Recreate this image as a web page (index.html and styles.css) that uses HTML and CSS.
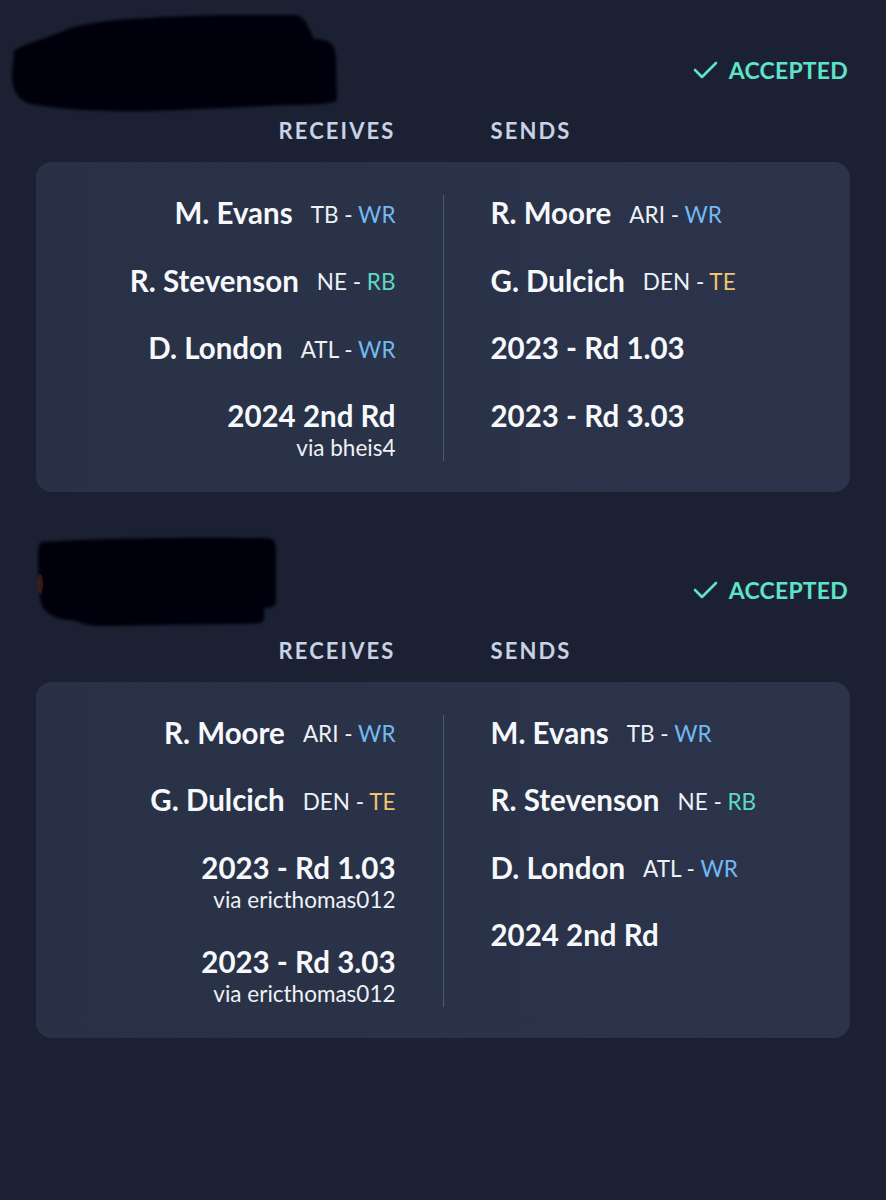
FILE: index.html
```html
<!DOCTYPE html>
<html lang="en">
<head>
  <meta charset="UTF-8">
  <title>Trades</title>
  <link rel="stylesheet" href="styles.css">
</head>
<body>

  <div class="page">

    <!-- trade one -->
    <section class="trade">
      <div class="trade-head">
        <svg class="redact redact-one" width="340" height="110" viewBox="0 0 340 110">
          <defs><filter id="soft1"><feGaussianBlur stdDeviation="1.6"/></filter></defs>
          <path filter="url(#soft1)" fill="#030308" d="M8 42 C18 34 40 30 62 20 C90 10 150 8 210 6 L290 6 C300 8 304 22 308 30 C322 30 330 34 330 50 L331 92 C320 96 300 96 280 96 L150 102 C100 103 60 101 30 96 C14 94 6 84 6 66 Z"/>
        </svg>
        <div class="status">
          <svg class="check" width="26" height="20" viewBox="0 0 26 20"><polyline points="2,10 9,17 23,3" fill="none" stroke="#5ee3cb" stroke-width="2.6" stroke-linecap="round" stroke-linejoin="round"/></svg>
          ACCEPTED
        </div>
      </div>

      <div class="sides">
        <div class="side-label receives">RECEIVES</div>
        <div></div>
        <div class="side-label">SENDS</div>
      </div>

      <div class="card">
        <div class="col col-left">
          <div class="asset"><span class="name">M. Evans</span><span class="team">TB - <span class="wr">WR</span></span></div>
          <div class="asset"><span class="name">R. Stevenson</span><span class="team">NE - <span class="rb">RB</span></span></div>
          <div class="asset"><span class="name">D. London</span><span class="team">ATL - <span class="wr">WR</span></span></div>
          <div class="pick"><span class="name">2024 2nd Rd</span><span class="via">via bheis4</span></div>
        </div>
        <div class="divider"></div>
        <div class="col col-right">
          <div class="asset"><span class="name">R. Moore</span><span class="team">ARI - <span class="wr">WR</span></span></div>
          <div class="asset"><span class="name">G. Dulcich</span><span class="team">DEN - <span class="te">TE</span></span></div>
          <div class="pick"><span class="name">2023 - Rd 1.03</span></div>
          <div class="pick"><span class="name">2023 - Rd 3.03</span></div>
        </div>
      </div>
    </section>

    <!-- trade two -->
    <section class="trade">
      <div class="trade-head">
        <svg class="redact redact-two" width="250" height="100" viewBox="0 0 250 100">
          <defs><filter id="soft2"><feGaussianBlur stdDeviation="1.4"/></filter></defs>
          <path filter="url(#soft2)" fill="#030308" d="M10 8 C60 4 150 3 236 4 C242 4 244 10 244 16 L244 68 C244 72 240 74 232 74 L232 86 C230 90 220 90 200 90 L70 92 C52 92 48 88 40 86 C24 86 10 80 8 64 L6 30 C6 16 6 10 10 8 Z"/>
          <ellipse cx="8" cy="50" rx="3" ry="10" fill="#4a2418" opacity="0.7"/>
        </svg>
        <div class="status">
          <svg class="check" width="26" height="20" viewBox="0 0 26 20"><polyline points="2,10 9,17 23,3" fill="none" stroke="#5ee3cb" stroke-width="2.6" stroke-linecap="round" stroke-linejoin="round"/></svg>
          ACCEPTED
        </div>
      </div>

      <div class="sides">
        <div class="side-label receives">RECEIVES</div>
        <div></div>
        <div class="side-label">SENDS</div>
      </div>

      <div class="card">
        <div class="col col-left">
          <div class="asset"><span class="name">R. Moore</span><span class="team">ARI - <span class="wr">WR</span></span></div>
          <div class="asset"><span class="name">G. Dulcich</span><span class="team">DEN - <span class="te">TE</span></span></div>
          <div class="pick"><span class="name">2023 - Rd 1.03</span><span class="via">via ericthomas012</span></div>
          <div class="pick"><span class="name">2023 - Rd 3.03</span><span class="via">via ericthomas012</span></div>
        </div>
        <div class="divider"></div>
        <div class="col col-right">
          <div class="asset"><span class="name">M. Evans</span><span class="team">TB - <span class="wr">WR</span></span></div>
          <div class="asset"><span class="name">R. Stevenson</span><span class="team">NE - <span class="rb">RB</span></span></div>
          <div class="asset"><span class="name">D. London</span><span class="team">ATL - <span class="wr">WR</span></span></div>
          <div class="pick"><span class="name">2024 2nd Rd</span></div>
        </div>
      </div>
    </section>

  </div>

</body>
</html>
```

FILE: styles.css
```css
body {
  margin: 0;
  background-color: #1b2133;
  font-family: Lato, "Open Sans", sans-serif;
  color: #f4f6fa;
}

.page {
  padding: 0 36px;
}

.trade {
  margin-bottom: 28px;
}

.trade-head {
  position: relative;
  height: 90px;
}

/* redaction blobs sit on top of the user name */
.redact {
  position: absolute;
}

.redact-one {
  left: -30px;
  top: 9px;
}

.redact-two {
  left: -4px;
  top: 14px;
}

.status {
  display: flex;
  justify-content: flex-end;
  align-items: center;
  gap: 10px;
  padding-top: 50px;
  padding-right: 2px;
  height: 40px;
  font-size: 23px;
  font-weight: 700;
  letter-spacing: 0.2px;
  color: #5ee3cb;
}

.sides {
  display: grid;
  grid-template-columns: 1fr 1px 1fr;
  column-gap: 47px;
  margin-top: 26px;
  margin-bottom: 16px;
}

.side-label {
  font-size: 22px;
  line-height: 30px;
  font-weight: 700;
  letter-spacing: 2.1px;
  color: #c8d2e6;
}

.receives {
  text-align: right;
}

.card {
  display: grid;
  grid-template-columns: 1fr 1px 1fr;
  column-gap: 47px;
  padding: 33px 0 31px;
  border-radius: 16px;
  background: linear-gradient(90deg, #283146, #2b344a);
}

.divider {
  background-color: #4f5a77;
}

.col {
  display: flex;
  flex-direction: column;
  gap: 31.5px;
}

.col-left {
  align-items: flex-end;
}

.col-right {
  align-items: flex-start;
}

.asset {
  display: flex;
  align-items: center;
  gap: 18px;
  height: 36px;
}

.pick {
  display: flex;
  flex-direction: column;
}

.col-left .pick {
  align-items: flex-end;
}

.name {
  font-size: 29.5px;
  line-height: 36px;
  font-weight: 700;
  color: #f6f8fb;
}

.team {
  font-size: 22.5px;
  padding-top: 2px;
  color: #eef1f6;
}

.via {
  font-size: 22.5px;
  line-height: 27px;
  color: #eef1f6;
}

.wr {
  color: #72b8f3;
}

.rb {
  color: #5ed8c2;
}

.te {
  color: #f2c46c;
}
```
